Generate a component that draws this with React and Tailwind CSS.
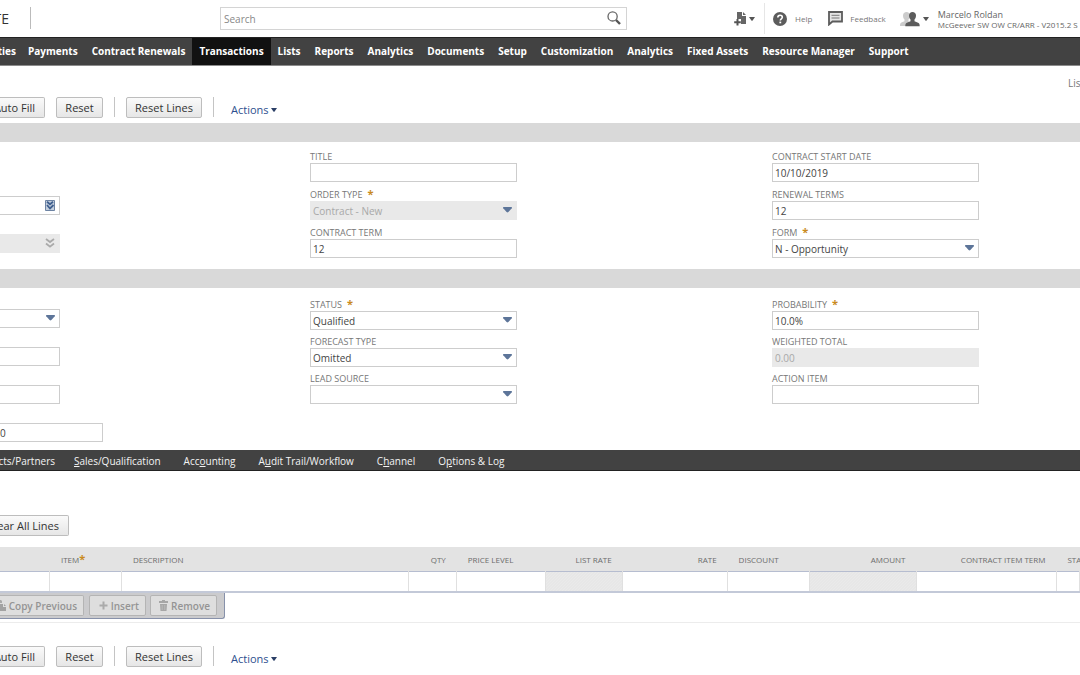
import React from 'react';

const NAV_ITEMS = [
  'Payments',
  'Contract Renewals',
  'Transactions',
  'Lists',
  'Reports',
  'Analytics',
  'Documents',
  'Setup',
  'Customization',
  'Analytics',
  'Fixed Assets',
  'Resource Manager',
  'Support',
];

// [before, access key, after]
const TABS = [
  ['', 'S', 'ales/Qualification'],
  ['Acc', 'o', 'unting'],
  ['A', 'u', 'dit Trail/Workflow'],
  ['C', 'h', 'annel'],
  ['O', 'p', 'tions & Log'],
];

const COLUMNS = [
  { label: '', width: 50 },
  { label: 'ITEM', width: 72, required: true },
  { label: 'DESCRIPTION', width: 287 },
  { label: 'QTY', width: 48, right: true },
  { label: 'PRICE LEVEL', width: 89 },
  { label: 'LIST RATE', width: 77, right: true, locked: true },
  { label: 'RATE', width: 105, right: true },
  { label: 'DISCOUNT', width: 82 },
  { label: 'AMOUNT', width: 107, right: true, locked: true },
  { label: 'CONTRACT ITEM TERM', width: 140, right: true },
  { label: 'STA', width: 23 },
];

const Caret = ({ className = '' }) => (
  <svg viewBox="0 0 6 4" className={`w-[6px] h-[4px] shrink-0 ${className}`} aria-hidden="true">
    <path d="M0 0h6L3.6 3.4a.8.8 0 0 1-1.2 0z" fill="currentColor" />
  </svg>
);

const SelectArrow = () => (
  <svg
    viewBox="0 0 9 6"
    className="absolute right-[5px] top-[6px] w-[9px] h-[6px] text-[#5d7599] pointer-events-none"
    aria-hidden="true"
  >
    <path d="M.6 0h7.8q.9.3.4 1.2L5.4 5q-.9.8-1.8 0L.2 1.2Q-.3.3.6 0z" fill="currentColor" />
  </svg>
);

const Star = () => <span className="text-[#c98a1e] font-bold text-[11px] leading-[10px]">*</span>;

const Field = ({ id, label, value = '', type = 'text', required, disabled }) => {
  const look = disabled
    ? 'bg-[#e9e9e9] border-[#e9e9e9] text-[#a8a8a8]'
    : 'bg-white border-[#cdcdcd] text-[#444]';
  return (
    <div className="w-[207px]">
      <label htmlFor={id} className="flex gap-[5px] h-[12px] text-[9px] leading-[12px] text-[#777]">
        {label}
        {required && <Star />}
      </label>
      <div className="relative">
        {type === 'select' ? (
          <>
            <select
              id={id}
              defaultValue={value}
              disabled={disabled}
              className={`block w-full h-[19px] px-[2px] border text-[10px] leading-[16px] appearance-none opacity-100 ${look}`}
            >
              <option>{value}</option>
            </select>
            <SelectArrow />
          </>
        ) : (
          <input
            id={id}
            type="text"
            defaultValue={value}
            disabled={disabled}
            className={`block w-full h-[19px] px-[2px] border text-[10px] leading-[16px] ${look}`}
          />
        )}
      </div>
    </div>
  );
};

const Button = ({ children, className = '' }) => (
  <button
    type="button"
    className={`flex items-center h-[21px] border border-[#bdbdbd] rounded-[2px] bg-linear-to-b from-[#fafafa] to-[#e6e6e6] text-[11px] leading-[18px] font-medium text-[#333] whitespace-nowrap ${className}`}
  >
    {children}
  </button>
);

const ActionBar = () => (
  <div className="flex items-start">
    <Button className="w-[45px] pr-[9px] justify-end border-l-0 rounded-l-none">Auto Fill</Button>
    <Button className="w-[47px] ml-[11px] justify-center">Reset</Button>
    <span className="w-px h-[20px] ml-[11px] bg-[#c4c4c4]" />
    <Button className="w-[76px] ml-[11px] justify-center">Reset Lines</Button>
    <span className="w-px h-[20px] ml-[11px] bg-[#c4c4c4]" />
    <button type="button" className="flex items-center gap-[2px] ml-[17px] pt-[5px] text-[11px] leading-[16px] font-medium text-[#2d4f8e]">
      Actions
      <Caret className="text-[#2b3f66]" />
    </button>
  </div>
);

const Header = () => (
  <header className="grid grid-cols-[220fr_407fr_453fr] h-[37px] bg-white">
    <div className="flex items-start pt-[7px]">
      <span className="flex justify-end w-[9px] text-[14px] leading-[24px] text-[#333]">TE</span>
      <span className="w-px h-[22px] ml-[21px] bg-[#bbb]" />
    </div>
    <div className="relative pt-[7px]">
      <input
        type="search"
        aria-label="Search"
        placeholder="Search"
        className="block w-full h-[23px] px-[3px] border border-[#d4d4d4] text-[10px] text-[#444] placeholder:text-[#888]"
      />
      <svg viewBox="0 0 14 14" className="absolute right-[6px] top-[11px] w-[14px] h-[14px]" fill="none" aria-hidden="true">
        <circle cx="5.6" cy="5.4" r="4.6" stroke="#666" strokeWidth="1.3" />
        <path d="M9 9l4 4" stroke="#555" strokeWidth="2.4" />
      </svg>
    </div>
    <div className="flex items-center min-w-0 pl-[107px] whitespace-nowrap text-[#666]">
      <button type="button" aria-label="Create new" className="flex items-center gap-[2px] shrink-0">
        <svg viewBox="0 0 13 15" className="w-[13px] h-[15px]" aria-hidden="true">
          <path d="M3 1h5v4h4v8H7V8H3z" fill="#666" />
          <path d="M9 1l3 3H9z" fill="#666" />
          <path d="M3.5 8v6.5M.2 11.2h6.6" stroke="#555" strokeWidth="2" />
        </svg>
        <Caret className="text-[#555]" />
      </button>
      <span className="w-px h-[31px] ml-[9px] shrink-0 bg-[#e6e6e6]" />
      <a href="#help" className="flex items-center gap-[8px] ml-[8px] shrink-0 text-[8px] leading-[12px] text-[#777]">
        <svg viewBox="0 0 14 14" className="w-[14px] h-[14px]" fill="none" aria-hidden="true">
          <circle cx="7" cy="7" r="7" fill="#5c5c5c" />
          <path d="M4.8 5.5c0-1.5 1-2.3 2.3-2.3s2.2.8 2.2 2c0 1.5-2 1.7-2 3.3" stroke="#fff" strokeWidth="1.6" />
          <path d="M6.4 9.6h1.8v1.7H6.4z" fill="#fff" />
        </svg>
        Help
      </a>
      <a href="#feedback" className="flex items-center gap-[7px] ml-[16px] shrink-0 text-[8px] leading-[12px] text-[#777]">
        <svg viewBox="0 0 15 15" className="w-[15px] h-[15px]" fill="none" aria-hidden="true">
          <path d="M1 1h13v9.500H4.500L1 13.500z" fill="#e4e4e4" stroke="#5c5c5c" strokeWidth="1.8" />
          <path d="M3.500 4.300h8M3.500 7h8" stroke="#777" strokeWidth="1" />
        </svg>
        Feedback
      </a>
      <button type="button" aria-label="Change role" className="flex items-center gap-[3px] ml-[14px] shrink-0">
        <svg viewBox="0 0 20 16" className="w-[20px] h-[16px]" aria-hidden="true">
          <path d="M3 4.500C3 2.300 4.500 1 6.500 1S10 2.300 10 4.500c0 2-.8 3.300-1.500 4v2L10 11.500V15H0c0-2.500.4-3.300 2-3.800l2.500-1V8.500C3.600 7.700 3 6.500 3 4.500z" fill="#ccc" />
          <path d="M9 4.500C9 2.200 10.500 1 12.500 1S16 2.200 16 4.500c0 2-.7 3.300-1.500 4v1.700l3 1.200c1.800.6 2.200 1.400 2.200 3.900H5.300c0-2.500.4-3.300 2.200-3.900l3-1.200V8.500C9.700 7.800 9 6.500 9 4.500z" fill="#5c5c5c" />
        </svg>
        <Caret className="text-[#555]" />
      </button>
      <div className="ml-[9px] shrink-0 text-[#666]">
        <div className="text-[9px] leading-[11px]">Marcelo Roldan</div>
        <div className="text-[8px] leading-[9px]">McGeever SW OW CR/ARR - V2015.2 S</div>
      </div>
    </div>
  </header>
);

const MainNav = () => (
  <nav className="flex h-[29px] bg-[#424242] border-t border-b border-t-[#222] border-b-[#8c8c8c] text-[10px] leading-[27px] font-bold text-white whitespace-nowrap">
    <a href="#activities" className="flex justify-end w-[21px] pr-[5px]">ties</a>
    {NAV_ITEMS.map((item, i) => (
      <a key={i} href="#nav" className={`px-[7px] ${item === 'Transactions' ? 'bg-[#111]' : ''}`}>
        {item}
      </a>
    ))}
  </nav>
);

// Fields whose left part and label run off the page edge
const EdgeInput = ({ label, children, disabled }) => (
  <div className="relative w-[60px]">
    <input
      type="text"
      aria-label={label}
      disabled={disabled}
      className={`block w-full h-[19px] border border-l-0 ${disabled ? 'bg-[#e9e9e9] border-[#e9e9e9]' : 'bg-white border-[#cdcdcd]'}`}
    />
    {children}
  </div>
);

const Section = ({ children }) => (
  <section>
    <div className="h-[19px] bg-[#d9d9d9]" />
    <div className="grid grid-cols-[310fr_462fr_308fr] h-[127px]">{children}</div>
  </section>
);

const PrimaryInfo = () => (
  <Section>
    <div className="flex flex-col gap-[19px] pt-[54px]">
      <EdgeInput label="Company">
        <svg viewBox="0 0 10 11" className="absolute right-[5px] top-[4px] w-[10px] h-[11px]" fill="none" aria-hidden="true">
          <path d="M.5.5h9v10h-9z" fill="#c3cedd" stroke="#6d83a3" />
          <path d="M2 1.800l3 2.500 3-2.500M2 5l3 3.500L8.500 5" stroke="#3f5f8f" strokeWidth="1.8" />
        </svg>
      </EdgeInput>
      <EdgeInput label="Contract" disabled>
        <svg viewBox="0 0 10 10" className="absolute right-[5px] top-[4px] w-[10px] h-[10px]" fill="none" aria-hidden="true">
          <path d="M1 1l4 3 4-3M1 5.500l4 3.200 4-3.200" stroke="#aaa" strokeWidth="1.8" />
        </svg>
      </EdgeInput>
    </div>
    <div className="flex flex-col gap-[7px] pt-[9px]">
      <Field id="title" label="TITLE" />
      <Field id="order-type" label="ORDER TYPE" value="Contract - New" type="select" required disabled />
      <Field id="contract-term" label="CONTRACT TERM" value="12" />
    </div>
    <div className="flex flex-col gap-[7px] pt-[9px]">
      <Field id="start-date" label="CONTRACT START DATE" value="10/10/2019" />
      <Field id="renewal-terms" label="RENEWAL TERMS" value="12" />
      <Field id="form" label="FORM" value="N - Opportunity" type="select" required />
    </div>
  </Section>
);

const Forecasting = () => (
  <Section>
    <div className="flex flex-col gap-[19px] pt-[21px]">
      <div className="relative w-[60px]">
        <select aria-label="Sales rep" className="block w-full h-[19px] border border-l-0 border-[#cdcdcd] bg-white appearance-none">
          <option />
        </select>
        <SelectArrow />
      </div>
      <EdgeInput label="Subsidiary" />
      <EdgeInput label="Department" />
      <input
        type="text"
        aria-label="Projected total"
        defaultValue="0"
        className="block w-[103px] h-[19px] border border-l-0 border-[#cdcdcd] text-[10px] text-[#444]"
      />
    </div>
    <div className="flex flex-col gap-[6px] pt-[11px]">
      <Field id="status" label="STATUS" value="Qualified" type="select" required />
      <Field id="forecast-type" label="FORECAST TYPE" value="Omitted" type="select" />
      <Field id="lead-source" label="LEAD SOURCE" type="select" />
    </div>
    <div className="flex flex-col gap-[6px] pt-[11px]">
      <Field id="probability" label="PROBABILITY" value="10.0%" required />
      <Field id="weighted-total" label="WEIGHTED TOTAL" value="0.00" disabled />
      <Field id="action-item" label="ACTION ITEM" />
    </div>
  </Section>
);

const SubTabs = () => (
  <nav className="flex h-[21px] bg-[#424242] border-b border-[#222] text-[10px] leading-[22px] font-medium text-[#f4f4f4] whitespace-nowrap">
    <a href="#partners" className="flex justify-end w-[55px] mr-[19px]">cts/Partners</a>
    {TABS.map(([before, accessKey, after]) => (
      <a key={after} href="#tab" className="mr-[23px]">
        {before}
        <u>{accessKey}</u>
        {after}
      </a>
    ))}
  </nav>
);

const LineButton = ({ icon, children, className = '' }) => (
  <button
    type="button"
    disabled
    className={`flex items-center justify-end gap-[3px] h-[21px] pr-[6px] border border-[#b4b4b4] rounded-[2px] bg-[#dedede] text-[10px] leading-[18px] font-semibold text-[#949494] whitespace-nowrap ${className}`}
  >
    {icon}
    {children}
  </button>
);

const LineItems = () => (
  <div className="border-b border-[#ececec]">
    <table className="w-full table-fixed border-collapse">
      <colgroup>
        {COLUMNS.map((col) => (
          <col key={col.label} style={{ width: `${col.width / 10.8}%` }} />
        ))}
      </colgroup>
      <thead>
        <tr className="h-[24px] bg-[#e3e3e3] border-b border-[#b6bdd0]">
          {COLUMNS.map((col) => (
            <th
              key={col.label}
              scope="col"
              className={`p-0 pl-[11px] pt-[2px] text-[8px] leading-[12px] font-medium text-[#6c6c6c] whitespace-nowrap ${col.right ? 'text-right pr-[11px]' : 'text-left'}`}
            >
              {col.label}
              {col.required && <Star />}
            </th>
          ))}
        </tr>
      </thead>
      <tbody>
        <tr className="h-[21px] border-b-2 border-[#c3c9d8]">
          {COLUMNS.map((col) => (
            <td
              key={col.label}
              className={`p-0 border-r border-[#e0e0e0] ${col.locked ? 'bg-[linear-gradient(135deg,#e4e4e4_25%,#f0f0f0_25%_50%,#e4e4e4_50%_75%,#f0f0f0_75%)] bg-[size:3px_3px]' : ''}`}
            >
              <input
                type="text"
                aria-label={col.label || 'Line'}
                disabled={col.locked}
                className="block w-full h-[19px] px-[3px] text-[10px] bg-transparent"
              />
            </td>
          ))}
        </tr>
      </tbody>
    </table>
    <div className="flex w-[225px] h-[26px] pt-[2px] mb-[3px] bg-[#cbcbcd] border-r border-b border-[#8791aa] rounded-br-[3px]">
      <LineButton
        className="w-[84px] border-l-0 rounded-l-none"
        icon={
          <svg viewBox="0 0 10 11" className="w-[10px] h-[11px] shrink-0" aria-hidden="true">
            <path d="M0 0h5l1 1v2H3v5H0z" fill="#aaa" />
            <path d="M4 4h3v3h3v4H4z" fill="#a2a2a2" />
            <path d="M8 4l2 2H8z" fill="#a2a2a2" />
          </svg>
        }
      >
        Copy Previous
      </LineButton>
      <LineButton
        className="w-[57px] ml-[5px]"
        icon={
          <svg viewBox="0 0 9 9" className="w-[9px] h-[9px] shrink-0" aria-hidden="true">
            <path d="M4.500.5v8M.5 4.500h8" stroke="#aaa" strokeWidth="2" />
          </svg>
        }
      >
        Insert
      </LineButton>
      <LineButton
        className="w-[67px] ml-[4px]"
        icon={
          <svg viewBox="0 0 9 11" className="w-[9px] h-[11px] shrink-0" aria-hidden="true">
            <path d="M3 0h3v1h3v2H0V1h3zM1 4h7l-.5 7h-6z" fill="#a6a6a6" />
            <path d="M3.200 5v5M5.800 5v5" stroke="#c8c8c8" strokeWidth=".6" />
          </svg>
        }
      >
        Remove
      </LineButton>
    </div>
  </div>
);

const App = () => (
  <div className="min-h-screen overflow-hidden bg-white font-['Open_Sans',sans-serif]">
    <Header />
    <MainNav />
    <main>
      <div className="flex justify-end h-[31px] pt-[9px]">
        <a href="#list" className="w-[12px] text-[10px] leading-[16px] text-[#777]">Lis</a>
      </div>
      <ActionBar />
      <div className="mt-[5px]">
        <PrimaryInfo />
        <Forecasting />
      </div>
      <div className="mt-[35px]">
        <SubTabs />
      </div>
      <div className="pt-[44px] pb-[11px]">
        <Button className="w-[69px] pr-[9px] justify-end border-l-0 rounded-l-none">Clear All Lines</Button>
      </div>
      <LineItems />
      <div className="pt-[23px]">
        <ActionBar />
      </div>
    </main>
  </div>
);

export default App;
